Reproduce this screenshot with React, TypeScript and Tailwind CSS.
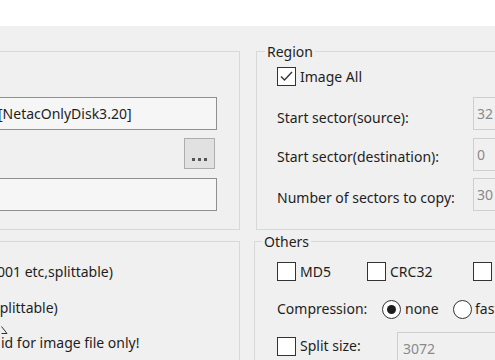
import React from "react";

function Check({ checked = false }: { checked?: boolean }) {
  return (
    <span className="w-[19px] h-[19px] shrink-0 border border-[#333333] bg-white flex items-center justify-center">
      {checked && (
        <svg width="15" height="15" viewBox="0 0 15 15">
          <polyline points="2,7.5 5.5,11 13,3" fill="none" stroke="#333333" strokeWidth="1.4" />
        </svg>
      )}
    </span>
  );
}

function Radio({ checked = false }: { checked?: boolean }) {
  return (
    <span className="w-[19px] h-[19px] shrink-0 rounded-full border border-[#333333] bg-white flex items-center justify-center">
      {checked && <span className="w-[9px] h-[9px] rounded-full bg-[#1e1e1e]" />}
    </span>
  );
}

function Field({ value }: { value: string }) {
  return (
    <div className="w-[150px] h-[33px] shrink-0 border border-[#cfcfcf] bg-[#f0f0f0] flex items-center pl-[3px] text-[#8a8a8a]">
      {value}
    </div>
  );
}

export default function App() {
  return (
    <div className="relative w-[495px] h-[360px] overflow-hidden bg-[#f0f0f0] font-['Noto_Sans',sans-serif] text-[14px] leading-[20px] text-[#1e1e1e]">
      <div className="h-[26px] bg-white" />
      <div className="flex gap-[16px] w-[700px]">
        {/* Left column */}
        <div className="w-[240px] shrink-0 flex flex-col">
          <div className="mt-[25px] -ml-[10px] h-[179px] border border-[#d8d8d8] flex flex-col items-end pt-[45px] pr-[22px]">
            <div className="w-full h-[33px] border border-[#8f8f8f] bg-[#f6f6f6] flex items-center pl-[6px] whitespace-nowrap">
              [NetacOnlyDisk3.20]
            </div>
            <div className="mt-[8px] mr-[2px] w-[31px] h-[31px] border border-[#adadad] bg-[#e1e1e1] flex items-end justify-center pb-[7px]">
              <span className="flex gap-[3px]">
                <span className="w-[3px] h-[3px] bg-[#555]" />
                <span className="w-[3px] h-[3px] bg-[#555]" />
                <span className="w-[3px] h-[3px] bg-[#555]" />
              </span>
            </div>
            <div className="mt-[9px] w-full h-[33px] border border-[#8f8f8f] bg-[#f6f6f6]" />
          </div>
          <div className="relative mt-[11px] -ml-[10px] h-[140px] border border-[#d8d8d8] flex flex-col items-start pt-[20px] pl-[6px]">
            <span className="whitespace-nowrap">001 etc,splittable)</span>
            <span className="mt-[16px] whitespace-nowrap -ml-[4px]">splittable)</span>
            <span className="mt-[15px] whitespace-nowrap ml-[4px]">id for image file only!</span>
            <svg className="absolute left-[10px] top-[84px]" width="8" height="9" viewBox="0 0 8 9">
              <path d="M0.5 0.5 L6 7.5 L0.5 7.5" fill="none" stroke="#333" strokeWidth="1" />
            </svg>
          </div>
        </div>

        {/* Right column */}
        <div className="w-[400px] shrink-0 flex flex-col">
          <div className="mt-[25px] h-[179px] border border-[#d8d8d8] flex flex-col items-start pl-[20px]">
            <span className="-mt-[10px] -ml-[12px] px-[2px] bg-[#f0f0f0]">Region</span>
            <div className="mt-[5px] flex items-center gap-[4px] h-[19px]">
              <Check checked />
              <span>Image All</span>
            </div>
            <div className="mt-[11px] flex items-center">
              <span className="w-[196px] pt-[8px] whitespace-nowrap">Start sector(source):</span>
              <Field value="32" />
            </div>
            <div className="mt-[8px] flex items-center">
              <span className="w-[196px] pt-[4px] whitespace-nowrap">Start sector(destination):</span>
              <Field value="0" />
            </div>
            <div className="mt-[7px] flex items-center">
              <span className="w-[196px] pt-[6px] whitespace-nowrap">Number of sectors to copy:</span>
              <Field value="30" />
            </div>
          </div>
          <div className="mt-[11px] -ml-[2px] h-[200px] border border-[#d8d8d8] flex flex-col items-start pl-[22px]">
            <span className="-mt-[10px] -ml-[15px] px-[2px] bg-[#f0f0f0]">Others</span>
            <div className="mt-[10px] flex items-center h-[19px]">
              <div className="w-[90px] flex items-center gap-[4px]">
                <Check />
                <span>MD5</span>
              </div>
              <div className="w-[106px] flex items-center gap-[4px]">
                <Check />
                <span>CRC32</span>
              </div>
              <div className="flex items-center gap-[4px]">
                <Check />
                <span>SHA1</span>
              </div>
            </div>
            <div className="mt-[18px] flex items-center h-[20px]">
              <span className="w-[105px] whitespace-nowrap">Compression:</span>
              <div className="w-[71px] flex items-center gap-[4px]">
                <Radio checked />
                <span>none</span>
              </div>
              <div className="flex items-center gap-[3px]">
                <Radio />
                <span>fast</span>
              </div>
            </div>
            <div className="mt-[13px] flex items-start">
              <div className="w-[120px] mt-[4px] flex items-center gap-[4px]">
                <Check />
                <span className="whitespace-nowrap">Split size:</span>
              </div>
              <div className="w-[160px] h-[33px] border border-[#cfcfcf] bg-[#f0f0f0] pl-[5px] pt-[6px] text-[#8a8a8a]">
                3072
              </div>
            </div>
          </div>
        </div>
      </div>
    </div>
  );
}
